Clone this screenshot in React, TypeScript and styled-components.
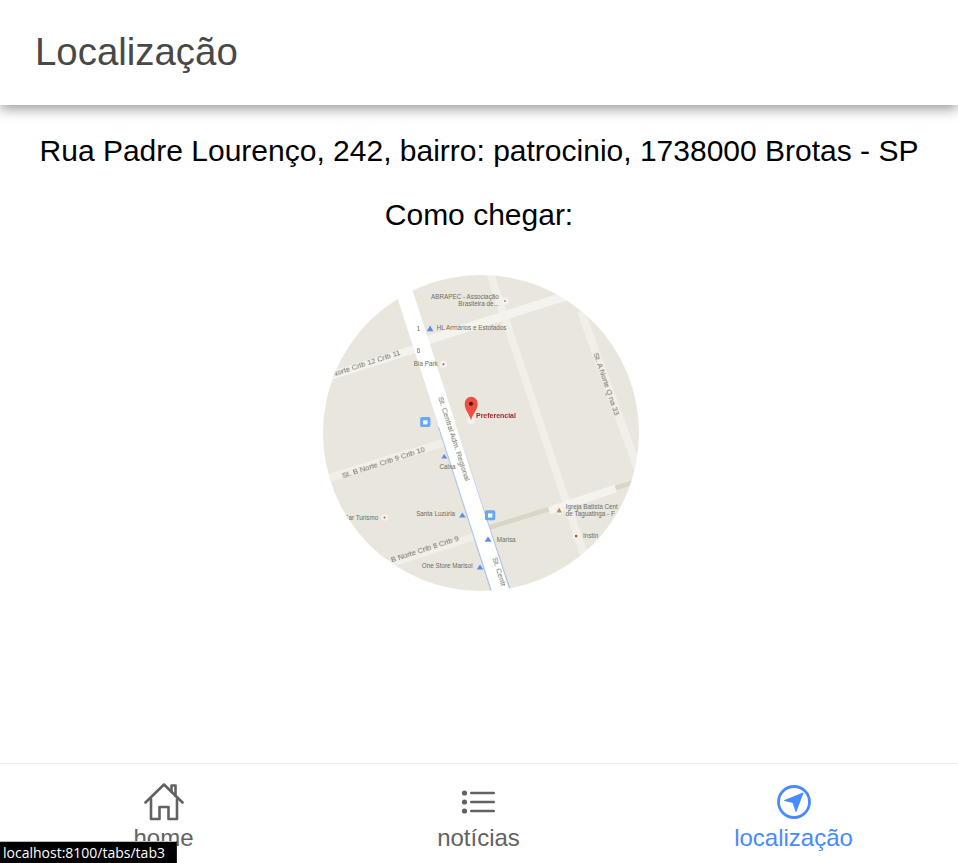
import React from "react";
import styled, { createGlobalStyle } from "styled-components";

const GlobalStyle = createGlobalStyle`
  html, body {
    margin: 0;
    padding: 0;
    height: 100%;
    background: #fff;
    font-family: "Liberation Sans", Arial, sans-serif;
  }
`;

const TABS = [
  { label: "home", icon: <HomeIcon />, href: "tab1" },
  { label: "notícias", icon: <ListIcon />, href: "tab2" },
  { label: "localização", icon: <NavigateIcon />, href: "tab3", active: true },
];

export default function App() {
  return (
    <>
      <GlobalStyle />
      <Page>
        <Header>
          <Title>Localização</Title>
        </Header>
        <Content>
          <Address>Rua Padre Lourenço, 242, bairro: patrocinio, 1738000 Brotas - SP</Address>
          <Directions>Como chegar:</Directions>
          <MapCircle>
            <MapDrawing />
          </MapCircle>
        </Content>
        <TabBar>
          {TABS.map((tab) => (
            <Tab key={tab.label} $active={tab.active}>
              <TabIcon>{tab.icon}</TabIcon>
              <TabLabel>{tab.label}</TabLabel>
            </Tab>
          ))}
        </TabBar>
        <StatusLink>localhost:8100/tabs/tab3</StatusLink>
      </Page>
    </>
  );
}

function HomeIcon() {
  return (
    <svg width="40" height="38" viewBox="0 0 40 38" fill="none" stroke="currentColor" strokeWidth="2.6" strokeLinejoin="round" strokeLinecap="round">
      <path d="M1.5 19.5 L20 1.5 L38.5 19.5" />
      <path d="M27.5 8.5 V2.5 H31.5 V13" />
      <path d="M7 16 V36 H15.5 V24 H24.5 V36 H33 V16" />
    </svg>
  );
}

function ListIcon() {
  return (
    <svg width="36" height="28" viewBox="0 0 36 28" fill="currentColor">
      <circle cx="3.5" cy="5" r="2.6" />
      <circle cx="3.5" cy="14" r="2.6" />
      <circle cx="3.5" cy="23" r="2.6" />
      <rect x="9" y="3.8" width="25" height="2.4" rx="1.2" />
      <rect x="9" y="12.8" width="25" height="2.4" rx="1.2" />
      <rect x="9" y="21.8" width="25" height="2.4" rx="1.2" />
    </svg>
  );
}

function NavigateIcon() {
  return (
    <svg width="36" height="36" viewBox="0 0 36 36">
      <circle cx="18" cy="18" r="15.5" fill="none" stroke="currentColor" strokeWidth="2.8" />
      <path d="M27 9 L8.5 16.5 L17 18.5 L20 27.5 Z" fill="currentColor" stroke="currentColor" strokeWidth="1" strokeLinejoin="round" />
    </svg>
  );
}

// hand drawn copy of the map thumbnail, coordinates are in a 950 wide box
function MapDrawing() {
  return (
    <MapSvg viewBox="40 43 950 950">
      <rect x="0" y="0" width="1040" height="1040" fill="#e9e6dd" />

      <g fill="none" strokeLinecap="butt">
        <path d="M540 30 L830 900" stroke="#f2efe8" strokeWidth="24" />
        <path d="M815 150 L995 650" stroke="#f2efe8" strokeWidth="24" />
        <path d="M50 350 L340 258" stroke="#f5f3ed" strokeWidth="24" />
        <path d="M350 240 L790 100" stroke="#f5f3ed" strokeWidth="26" />
        <path d="M50 655 L410 545" stroke="#f2efe8" strokeWidth="24" />
        <path d="M230 915 L510 825" stroke="#f2efe8" strokeWidth="22" />
        <path d="M540 802 L725 745" stroke="#d9d6c8" strokeWidth="14" />
        <path d="M915 685 L1000 658" stroke="#d9d6c8" strokeWidth="14" />
        <path d="M720 752 L920 685" stroke="#f5f3ed" strokeWidth="24" />
        <path d="M388 500 L548 1000" stroke="#a9c6f2" strokeWidth="4" />
        <path d="M436 490 L606 1000" stroke="#a9c6f2" strokeWidth="4" />
        <path d="M283 90 L580 1010" stroke="#fff" strokeWidth="50" />
      </g>

      <g fontFamily="'Liberation Sans', Arial, sans-serif" fontSize="19" fill="#6c6c63">
        <MapLabel x="365" y="115">ABRAPEC - Associação</MapLabel>
        <MapLabel x="447" y="137">Brasileira de...</MapLabel>
        <MapLabel x="382" y="208">HL Armários e Estofados</MapLabel>
        <MapLabel x="313" y="317">Bia Park</MapLabel>
        <MapLabel x="320" y="769">Santa Luzúria</MapLabel>
        <MapLabel x="390" y="625">Caixa</MapLabel>
        <MapLabel x="105" y="780">Far Turismo</MapLabel>
        <MapLabel x="562" y="845">Marisa</MapLabel>
        <MapLabel x="337" y="925">One Store Marisol</MapLabel>
        <MapLabel x="770" y="747">Igreja Batista Cent</MapLabel>
        <MapLabel x="770" y="768">de Taguatinga - F</MapLabel>
        <MapLabel x="822" y="835">Instin</MapLabel>
        <MapLabel transform="translate(70 350) rotate(-18)" fontSize="23">Norte Crib 12 Crib 11</MapLabel>
        <MapLabel transform="translate(100 655) rotate(-18)" fontSize="23">St. B Norte Crib 9 Crib 10</MapLabel>
        <MapLabel transform="translate(235 912) rotate(-18)" fontSize="23">. B Norte Crib 8 Crib 9</MapLabel>
        <MapLabel transform="translate(385 412) rotate(72)" fontSize="23">St. Central Adm. Regional</MapLabel>
        <MapLabel transform="translate(548 895) rotate(72)" fontSize="23">St. Centr</MapLabel>
        <MapLabel transform="translate(852 280) rotate(71)" fontSize="23">St. A Norte Q na 33</MapLabel>
        <MapLabel x="322" y="212">1</MapLabel>
        <MapLabel x="322" y="278">6</MapLabel>
      </g>

      <g fill="#5a8fe0">
        <path d="M352 212 L362 195 L372 212 Z" />
        <path d="M396 595 L404 581 L414 595 Z" />
        <path d="M449 772 L459 757 L469 772 Z" />
        <path d="M526 845 L536 829 L547 845 Z" />
        <path d="M502 928 L512 913 L522 928 Z" />
      </g>
      <rect x="332" y="470" width="31" height="30" rx="5" fill="#66a9f0" />
      <rect x="341" y="480" width="13" height="12" fill="#fff" />
      <rect x="527" y="750" width="31" height="30" rx="5" fill="#66a9f0" />
      <rect x="536" y="760" width="13" height="12" fill="#fff" />

      <circle cx="587" cy="121" r="11" fill="#f4f2ec" />
      <circle cx="587" cy="121" r="3" fill="#a88" />
      <circle cx="402" cy="311" r="11" fill="#f4f2ec" />
      <circle cx="402" cy="311" r="3" fill="#b55" />
      <circle cx="225" cy="772" r="10" fill="#f4f2ec" />
      <circle cx="225" cy="772" r="3" fill="#b55" />
      <circle cx="750" cy="751" r="13" fill="#f4f2ec" />
      <path d="M742 757 L750 743 L758 757 Z" fill="#b98a64" />
      <circle cx="801" cy="828" r="11" fill="#f4f2ec" />
      <circle cx="801" cy="828" r="4" fill="#a8552f" />

      <circle cx="485" cy="480" r="12" fill="#f4f2ec" />
      <path d="M485 480 C478 455 466 450 466 430 A19.5 21 0 0 1 505 430 C505 450 492 455 485 480 Z" fill="#ee4f45" />
      <circle cx="485" cy="430" r="6" fill="#4a1410" />
      <PinLabel x="500" y="474">Preferencial</PinLabel>
    </MapSvg>
  );
}

const Page = styled.div`
  position: relative;
  display: flex;
  flex-direction: column;
  height: 100vh;
  overflow: hidden;
`;

const Header = styled.header`
  position: relative;
  z-index: 1;
  flex: 0 0 105px;
  display: flex;
  align-items: center;
  padding-left: 35px;
  background: #fff;
  box-shadow: 0 4px 12px rgba(0, 0, 0, 0.4);
`;

const Title = styled.h1`
  margin: 0 0 2px;
  font-size: 38.4px;
  font-weight: 400;
  color: #484848;
`;

const Content = styled.main`
  flex: 1;
  display: flex;
  flex-direction: column;
  align-items: center;
  padding-top: 29px;
  color: #000;
  font-size: 30px;
  line-height: 33px;
`;

const Address = styled.p`
  margin: 0;
  white-space: nowrap;
`;

const Directions = styled.p`
  margin: 31px 0 0;
`;

const MapCircle = styled.div`
  width: 316px;
  height: 316px;
  margin: 44px 0 0 4px;
  border-radius: 50%;
  overflow: hidden;
`;

const MapSvg = styled.svg`
  display: block;
  width: 100%;
  height: 100%;
  filter: blur(0.6px);
`;

const MapLabel = styled.text``;

const PinLabel = styled.text`
  font-size: 21px;
  font-weight: 700;
  fill: #a3262a;
`;

const TabBar = styled.nav`
  flex: 0 0 100px;
  box-sizing: border-box;
  display: grid;
  grid-template-columns: repeat(3, 315px);
  padding-left: 6px;
  border-top: 1px solid #e9e9e9;
  background: #fff;
`;

const Tab = styled.div<{ $active?: boolean }>`
  display: flex;
  flex-direction: column;
  align-items: center;
  padding-top: 19px;
  color: ${(p) => (p.$active ? "#488aff" : "#626262")};
`;

const TabIcon = styled.span`
  display: flex;
  align-items: center;
  justify-content: center;
  height: 38px;
`;

const TabLabel = styled.span`
  margin-top: 3px;
  font-size: 24px;
  line-height: 28px;
`;

const StatusLink = styled.div`
  position: absolute;
  left: 0;
  bottom: 0;
  box-sizing: border-box;
  width: 177px;
  height: 22px;
  padding-left: 3px;
  border-top: 1px solid #bbb;
  border-right: 1px solid #222;
  background: #000;
  color: #fff;
  font-family: "Open Sans", sans-serif;
  font-size: 14px;
  line-height: 21px;
  white-space: nowrap;
`;
